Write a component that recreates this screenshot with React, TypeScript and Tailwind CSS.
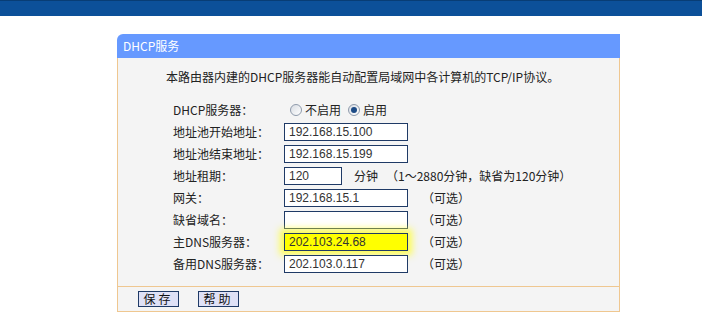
const cjk = "font-['Noto_Sans_CJK_SC','Noto_Sans',sans-serif]";

function Radio({ checked }: { checked?: boolean }) {
  return (
    <span className="flex h-[12px] w-[12px] items-center justify-center rounded-full border border-[#8e9aab] bg-gradient-to-br from-[#d9dde3] to-white">
      {checked && <span className="h-[6px] w-[6px] rounded-full bg-[#1d4b86]" />}
    </span>
  );
}

function Field({ value, highlight, width = "w-[124px]" }: { value: string; highlight?: boolean; width?: string }) {
  return (
    <div
      className={`flex h-[18px] ${width} items-center border border-[#1f3a66] pl-[4px] font-['Liberation_Sans',sans-serif] text-[12px] text-[#333] ${
        highlight ? "bg-[#ffff00] shadow-[0_0_7px_4px_rgba(255,255,40,0.8)]" : "bg-white"
      }`}
    >
      {value}
    </div>
  );
}

const rows = [
  { label: "地址池开始地址：", value: "192.168.15.100" },
  { label: "地址池结束地址：", value: "192.168.15.199" },
  { label: "地址租期：", value: "120", lease: true },
  { label: "网关：", value: "192.168.15.1", optional: true },
  { label: "缺省域名：", value: "", optional: true },
  { label: "主DNS服务器：", value: "202.103.24.68", optional: true, highlight: true },
  { label: "备用DNS服务器：", value: "202.103.0.117", optional: true },
];

export default function App() {
  return (
    <div className={`h-[331px] w-[702px] overflow-hidden bg-white ${cjk} text-[12px] text-[#222]`}>
      <div className="h-[16px] w-full border-t border-[#083d75] bg-[#0c5099]" />

      <div className="ml-[117px] mt-[18px] w-[503px]">
        {/* header */}
        <div className="flex h-[24px] items-center rounded-tl-[6px] bg-[#6699ff] pl-[6px] text-[12px] text-white">
          DHCP服务
        </div>

        {/* body */}
        <div className="border-x border-[#efc790] bg-[#f4f4f4] pb-[11px] pt-[10px]">
          <div className="flex h-[18px] items-center pl-[48px]">
            本路由器内建的DHCP服务器能自动配置局域网中各计算机的TCP/IP协议。
          </div>

          <div className="mt-[13px] flex flex-col pl-[55px]">
            <div className="flex h-[22px] items-center">
              <span className="w-[111px]">DHCP服务器：</span>
              <div className="flex items-center gap-[3px] pl-[6px]">
                <Radio />
                <span>不启用</span>
              </div>
              <div className="ml-[7px] flex items-center gap-[3px]">
                <Radio checked />
                <span>启用</span>
              </div>
            </div>

            {rows.map((r) => (
              <div key={r.label} className="flex h-[22px] items-center">
                <span className="w-[111px]">{r.label}</span>
                {r.lease ? (
                  <>
                    <Field value={r.value} width="w-[58px]" />
                    <span className="ml-[12px]">分钟</span>
                    <span className="ml-[8px]">（1～2880分钟，缺省为120分钟）</span>
                  </>
                ) : (
                  <Field value={r.value} highlight={r.highlight} />
                )}
                {r.optional && <span className="ml-[14px]">（可选）</span>}
              </div>
            ))}
          </div>
        </div>

        {/* footer */}
        <div className="flex h-[26px] items-center gap-[19px] border-x border-y border-[#efc790] bg-[#f4f4f4] pl-[20px]">
          <button className="flex h-[16px] w-[41px] items-center justify-center border border-[#1f3a66] bg-[#dfe1f6] text-[12px] tracking-[3px] text-[#111]">
            保存
          </button>
          <button className="flex h-[16px] w-[41px] items-center justify-center border border-[#1f3a66] bg-[#dfe1f6] text-[12px] tracking-[3px] text-[#111]">
            帮助
          </button>
        </div>
      </div>
    </div>
  );
}
